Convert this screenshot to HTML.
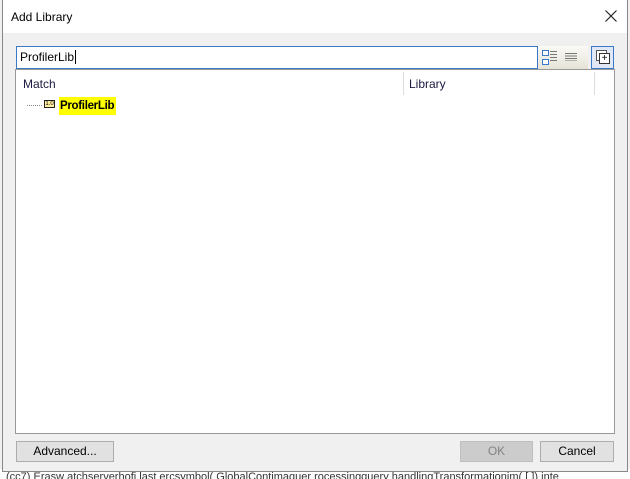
<!DOCTYPE html><html><head><style>
body{margin:0;width:630px;height:479px;position:relative;overflow:hidden;background:#e8e8e8;font-family:"Liberation Sans",sans-serif;font-size:12px}
div{position:absolute;box-sizing:border-box}
</style></head><body>
<div style="left:0;top:0;width:630px;height:479px;background:#f0f0f0"></div>
<div style="left:0;top:469px;width:630px;height:10px;background:#fff;color:#333;font-size:11px;line-height:10px;overflow:hidden;white-space:nowrap;padding-left:6px;padding-top:3px">(cc7) Erasw atchserverhofi last ercsymbol( GlobalContimaquer rocessingquery handlingTransformationim( [ ]) inte</div>
<div style="left:2px;top:0;width:626px;height:472px;background:#f0f0f0;border:1px solid #888;border-top:none"></div>
<div style="left:3px;top:0;width:624px;height:33px;background:#fff"></div>
<div style="left:11px;top:10px;font-size:12px;color:#000">Add Library</div>
<svg style="position:absolute;left:605px;top:10px" width="12" height="12"><path d="M0.5 0.5L11.5 11.5M11.5 0.5L0.5 11.5" stroke="#222" stroke-width="1.2"/></svg>
<div style="left:16px;top:46px;width:522px;height:23px;background:#fff;border:1px solid #3a78c8;padding:3px 3px;font-size:12px">ProfilerLib<span style="border-left:1px solid #000;margin-left:1px"></span></div>
<div style="left:538px;top:46px;width:50px;height:23px;background:linear-gradient(#fafaf6,#e6e4d8)"></div>
<div style="left:542px;top:50px;width:7px;height:6px;border:1px solid #3a78c8;background:#fff"></div>
<div style="left:542px;top:59px;width:7px;height:6px;border:1px solid #3a78c8;background:#fff"></div>
<div style="left:550px;top:51px;width:7px;height:12px;background:repeating-linear-gradient(#777 0 1px,transparent 1px 3px)"></div>
<div style="left:565px;top:53px;width:12px;height:8px;background:repeating-linear-gradient(#777 0 1px,transparent 1px 2.5px)"></div>
<div style="left:591px;top:46px;width:23px;height:23px;border:1px solid #3a78c8;background:#dfe8f4"></div>
<div style="left:596px;top:50px;width:11px;height:11px;border:1px solid #555;background:#fff"></div>
<div style="left:599px;top:53px;width:11px;height:11px;border:1px solid #333;background:#fff;font-size:10px;line-height:9px;text-align:center">+</div>
<div style="left:15px;top:69px;width:600px;height:365px;background:#fff;border:1px solid #999"></div>
<div style="left:403px;top:72px;width:1px;height:23px;background:#ddd"></div>
<div style="left:594px;top:72px;width:1px;height:23px;background:#ddd"></div>
<div style="left:23px;top:77px;color:#1a1a40">Match</div>
<div style="left:409px;top:77px;color:#1a1a40">Library</div>
<div style="left:27px;top:105px;width:15px;border-top:1px dotted #888"></div>
<div style="left:44px;top:100px;width:11px;height:8px;border:1px solid #222;background:#ffefa0;font-size:6px;line-height:6px;text-align:center">1.0</div>
<div style="left:59px;top:97px;width:57px;height:18px;background:#ffff00;font-weight:bold;padding:2px 0 0 1px;line-height:14px;font-size:11.5px;letter-spacing:-0.3px;white-space:nowrap">ProfilerLib</div>
<div style="left:16px;top:441px;width:98px;height:21px;border:1px solid #adadad;background:#e1e1e1;text-align:center;line-height:19px">Advanced...</div>
<div style="left:460px;top:441px;width:73px;height:21px;border:1px solid #bfbfbf;background:#cccccc;color:#838383;text-align:center;line-height:19px">OK</div>
<div style="left:540px;top:441px;width:74px;height:21px;border:1px solid #adadad;background:#e1e1e1;text-align:center;line-height:19px">Cancel</div>
</body></html>
